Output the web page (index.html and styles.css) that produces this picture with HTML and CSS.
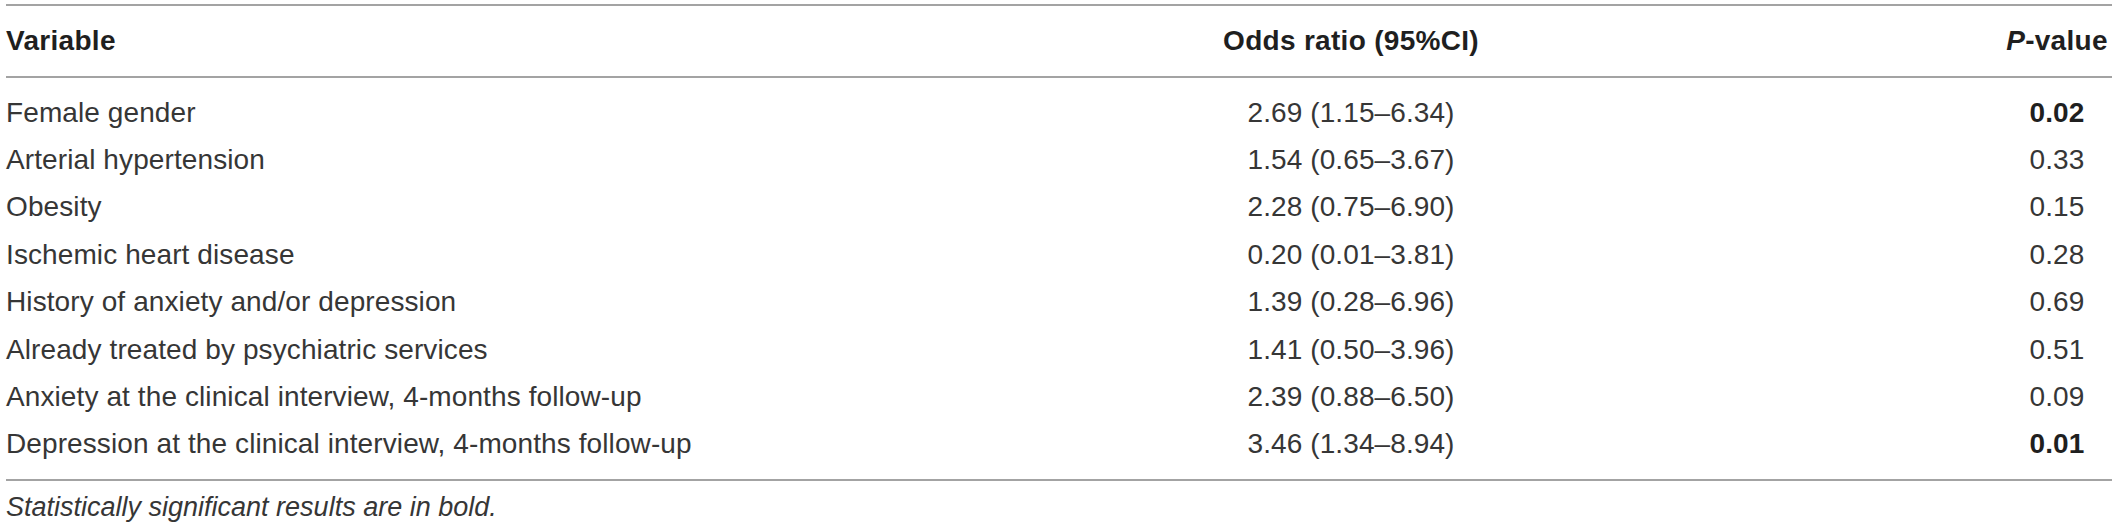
FILE: index.html
```html
<!DOCTYPE html>
<html lang="en">
<head>
<meta charset="utf-8">
<title>Odds ratio table</title>
<link rel="stylesheet" href="styles.css">
</head>
<body>
<div class="wrap">
  <table class="data">
    <colgroup>
      <col class="c-var">
      <col class="c-or">
      <col class="c-p">
    </colgroup>
    <thead>
      <tr>
        <th class="left">Variable</th>
        <th>Odds ratio (95%CI)</th>
        <th><i>P</i>-value</th>
      </tr>
    </thead>
    <tbody>
      <tr><td class="left">Female gender</td><td>2.69 (1.15–6.34)</td><td><b>0.02</b></td></tr>
      <tr><td class="left">Arterial hypertension</td><td>1.54 (0.65–3.67)</td><td>0.33</td></tr>
      <tr><td class="left">Obesity</td><td>2.28 (0.75–6.90)</td><td>0.15</td></tr>
      <tr><td class="left">Ischemic heart disease</td><td>0.20 (0.01–3.81)</td><td>0.28</td></tr>
      <tr><td class="left">History of anxiety and/or depression</td><td>1.39 (0.28–6.96)</td><td>0.69</td></tr>
      <tr><td class="left">Already treated by psychiatric services</td><td>1.41 (0.50–3.96)</td><td>0.51</td></tr>
      <tr><td class="left">Anxiety at the clinical interview, 4-months follow-up</td><td>2.39 (0.88–6.50)</td><td>0.09</td></tr>
      <tr><td class="left">Depression at the clinical interview, 4-months follow-up</td><td>3.46 (1.34–8.94)</td><td><b>0.01</b></td></tr>
    </tbody>
  </table>
  <p class="note">Statistically significant results are in bold.</p>
</div>
</body>
</html>
```
FILE: styles.css
```css
html, body {
  margin: 0;
  padding: 0;
  background: #ffffff;
}

body {
  font-family: "Liberation Sans", Arial, Helvetica, sans-serif;
  font-size: 28px;
  color: #363636;
}

.wrap {
  padding: 4px 0 0 6px;
  width: 2106px;
}

.data {
  width: 2106px;
  table-layout: fixed;
  border-collapse: collapse;
  border-spacing: 0;
}

.c-var { width: 694px; }
.c-or { width: 1302px; }
.c-p { width: 110px; }

.data th,
.data td {
  padding: 0;
  text-align: center;
  white-space: nowrap;
  vertical-align: middle;
}

.data .left {
  text-align: left;
}

.data thead tr {
  border-top: 2px solid #a3a3a3;
  border-bottom: 2px solid #a3a3a3;
}

.data th {
  height: 70px;
  font-weight: bold;
  color: #1f1f1f;
  letter-spacing: 0.3px;
  line-height: 32px;
}

.data td {
  height: 47.4px;
  line-height: 32px;
  letter-spacing: 0.1px;
}

.data tbody tr:first-child td {
  padding-top: 11px;
}

.data tbody tr:last-child td {
  padding-bottom: 11px;
}

.data tbody {
  border-bottom: 2px solid #a3a3a3;
}

.data b {
  color: #1f1f1f;
}

.note {
  margin: 10px 0 0 0;
  font-size: 27px;
  font-style: italic;
  line-height: 32px;
}
```
